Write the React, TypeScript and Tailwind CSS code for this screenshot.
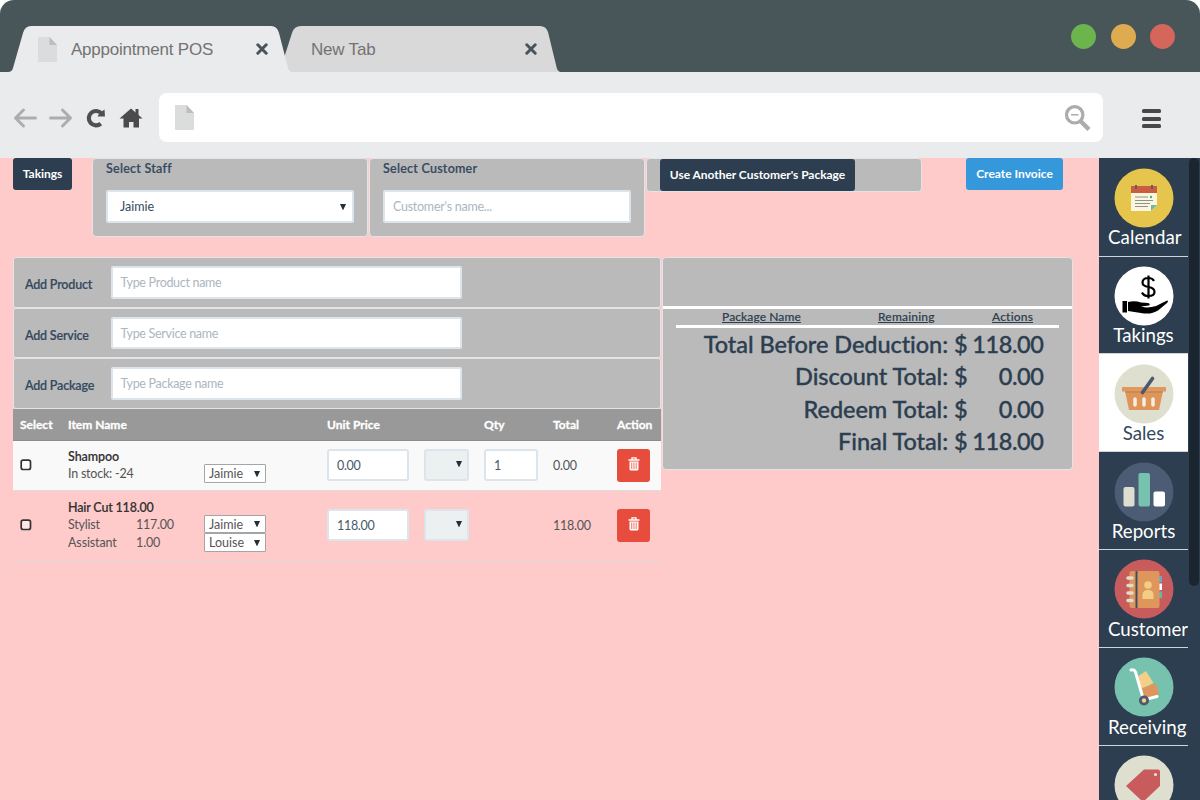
import React from "react";

function PageIcon() {
  return (
    <svg width="19" height="25" viewBox="0 0 19 25" className="block shrink-0">
      <path d="M0 0H11.5L19 8V25H0Z" fill="#dbdddc" />
      <path d="M11.5 0L19 8H11.5Z" fill="#bcbdbd" />
    </svg>
  );
}

function CloseIcon() {
  return (
    <svg width="12" height="12" viewBox="0 0 12 12" className="block shrink-0">
      <path d="M1.8 1.8L10.2 10.2M10.2 1.8L1.8 10.2" stroke="#485459" strokeWidth="3" strokeLinecap="round" />
    </svg>
  );
}

function Browser() {
  return (
    <header className="bg-white">
      <div className="relative flex h-[72px] rounded-t-[14px] bg-[#485559]">
        <svg className="absolute left-0 top-0" width="570" height="72" viewBox="0 0 570 72">
          <path d="M284 58L292 33Q294 26 301 26H540Q546 26 548 32L557 69Q558 71 560 72H290Q284 72 284 58Z" fill="#d9d9d9" />
          <path d="M8 72Q12 72 13 68L23 33Q25 26 31 26H271Q277 26 279 33L288 68Q289 72 293 72Z" fill="#eaebed" />
        </svg>
        <div className="relative mt-[26px] flex h-[46px] w-[286px] items-center pl-[38px] font-['Liberation_Sans',sans-serif] text-[17px] text-[#737373]">
          <PageIcon />
          <span className="ml-[14px] w-[185px] whitespace-nowrap pt-[2px] tracking-[-0.220px]">Apppointment POS</span>
          <CloseIcon />
        </div>
        <div className="relative mt-[26px] flex h-[46px] items-center pl-[25px] font-['Liberation_Sans',sans-serif] text-[17px] text-[#737373]">
          <span className="w-[214px] whitespace-nowrap pt-[2px] tracking-[-0.200px]">New Tab</span>
          <CloseIcon />
        </div>
        <div className="ml-auto flex gap-[14.5px] pr-[25px] pt-[24px]">
          <i className="h-[25px] w-[25px] rounded-full bg-[#6cb44c]" />
          <i className="h-[25px] w-[25px] rounded-full bg-[#dfab50]" />
          <i className="h-[25px] w-[25px] rounded-full bg-[#d5665c]" />
        </div>
      </div>
      <div className="flex h-[86px] items-start bg-[#eaebed] pl-[13px] pt-[21px]">
        <svg width="132" height="24" viewBox="0 0 132 24" className="mt-[13px] shrink-0">
          <g fill="none" stroke="#adadad" strokeWidth="3" strokeLinecap="round" strokeLinejoin="round">
            <path d="M22.500 12H3M10.500 4L2.500 12L10.500 20" />
            <path d="M37.500 12H57M49.500 4L57.500 12L49.500 20" />
          </g>
          <path d="M88.500 7.500A7.200 7.200 0 1 0 87.800 17.600" fill="none" stroke="#505050" strokeWidth="4.200" />
          <path d="M91.500 3.500L92 10.500H84.500L86.500 7Z" fill="#505050" />
          <path d="M118 2.500L129.600 12.500H126V21.500H120.500V16H116V21.500H110.500V12.500H106.500Z" fill="#4b4b4d" />
          <path d="M122.500 3H125.500V9H122.500Z" fill="#4b4b4d" />
        </svg>
        <div className="ml-[14px] flex h-[49px] w-[944px] items-center justify-between rounded-[8px] bg-white pl-[16px] pr-[11px]">
          <PageIcon />
          <svg width="28" height="28" viewBox="0 0 28 28">
            <circle cx="10.700" cy="10.800" r="8.200" fill="none" stroke="#acacac" strokeWidth="3.200" />
            <path d="M7 10.800H14.500" stroke="#acacac" strokeWidth="1.500" />
            <path d="M16.500 17L25 25.500" stroke="#acacac" strokeWidth="4.500" />
          </svg>
        </div>
        <div className="ml-[39px] mt-[16px] flex flex-col gap-[3.500px]">
          <i className="h-[4px] w-[19px] rounded-[1.500px] bg-[#48484a]" />
          <i className="h-[4px] w-[19px] rounded-[1.500px] bg-[#48484a]" />
          <i className="h-[4px] w-[19px] rounded-[1.500px] bg-[#48484a]" />
        </div>
      </div>
    </header>
  );
}

function Arrow() {
  return (
    <svg width="6" height="6" viewBox="0 0 6 6" className="shrink-0">
      <path d="M0 0H6L3.200 6H2.800Z" fill="#222e38" />
    </svg>
  );
}

function Field({ name, title }: { name: string; title: string }) {
  return (
    <div className="flex h-[50.500px] rounded-[3px] border border-[#e2e4e5] bg-[#bababa] pl-[11px]">
      <label className="w-[85.500px] pt-[17.300px] text-[12.500px] font-semibold leading-[20px] tracking-[-0.200px] text-[#34495e] [-webkit-text-stroke:0.150px_#34495e]">{title}</label>
      <div className="mt-[8px] flex h-[32.500px] w-[351.500px] items-center rounded-[2px] border-2 border-[#dce4ec] bg-white pl-[8px] pt-[2.500px] text-[12.500px] tracking-[-0.300px] text-[#acb6c0]">
        {name}
      </div>
    </div>
  );
}

function SmallSelect({ name }: { name: string }) {
  return (
    <div className="flex h-[18.500px] w-[62px] items-center justify-between rounded-[1px] border border-[#a5a5a5] bg-white pl-[4px] pr-[5px] text-[12.500px] leading-[16px] tracking-normal text-[#555]">
      <span className="pt-[1px]">{name}</span>
      <Arrow />
    </div>
  );
}

function GreySelect() {
  return (
    <div className="flex h-[32px] w-[45px] items-center justify-end rounded-[3px] border-2 border-[#dce4ec] bg-[#ecf0f1] pb-[2px] pr-[5px]">
      <Arrow />
    </div>
  );
}

function Price({ value, wide }: { value: string; wide?: boolean }) {
  return (
    <div className={`flex h-[32px] items-center rounded-[3px] border-2 border-[#dce4ec] bg-white pl-[8px] pt-[2px] text-[12.500px] tracking-[-0.300px] text-[#46586a] ${wide ? "w-[82px]" : "w-[54px]"}`}>
      {value}
    </div>
  );
}

function Trash() {
  return (
    <div className="flex h-[33px] w-[33px] items-center justify-center rounded-[3px] bg-[#e74c3c] pb-[3px]">
      <svg width="12" height="14" viewBox="0 0 12 14">
        <path d="M0.500 3H11.500M4 2.800V0.800H8V2.800" fill="none" stroke="#fff" strokeWidth="1.300" />
        <path d="M1.500 4.500H10.500V12Q10.500 13.500 9 13.500H3Q1.500 13.500 1.500 12Z" fill="#fff" />
        <path d="M3.500 5.500V12M5.200 5.500V12M6.900 5.500V12M8.600 5.500V12" stroke="#e74c3c" strokeWidth="0.600" />
      </svg>
    </div>
  );
}

function Check() {
  return (
    <svg width="12" height="12" viewBox="0 0 12 12" className="block">
      <rect x="1.200" y="1.200" width="9.300" height="9.300" rx="2" fill="#fff" fillOpacity="0.500" stroke="#333" strokeWidth="1.700" />
    </svg>
  );
}

const columns = "grid grid-cols-[48px_136px_123px_97px_60px_69px_64px_44px] pl-[7px]";

function ItemTable() {
  return (
    <div className="text-[12.500px] tracking-[-0.220px] text-[#555]">
      <div className={`${columns} h-[32px] items-center border-b border-[#8d8d8d] bg-[#999] pt-[2px] text-[12px] font-bold tracking-normal text-white [-webkit-text-stroke:0.300px_#fff]`}>
        <span>Select</span>
        <span>Item Name</span>
        <span />
        <span>Unit Price</span>
        <span />
        <span>Qty</span>
        <span>Total</span>
        <span>Action</span>
      </div>
      <div className={`${columns} h-[50px] items-center border-b border-[#ddd] bg-[#f9f9f9]`}>
        <Check />
        <div className="leading-[17px]">
          <b className="block font-semibold tracking-[-0.080px] text-[#333] [-webkit-text-stroke:0.100px_#333]">Shampoo</b>
          <span>In stock: -24</span>
        </div>
        <div className="pt-[17px]"><SmallSelect name="Jaimie" /></div>
        <Price value="0.00" wide />
        <GreySelect />
        <Price value="1" />
        <span className="pt-[2px]">0.00</span>
        <Trash />
      </div>
      <div className={`${columns} h-[71px] items-center border-b border-[#e0d5d5] pb-[1px]`}>
        <Check />
        <div className="leading-[17px]">
          <b className="block font-semibold tracking-[-0.180px] text-[#333] [-webkit-text-stroke:0.100px_#333]">Hair Cut 118.00</b>
          <div className="flex"><span className="w-[68px]">Stylist</span><span>117.00</span></div>
          <div className="flex pt-[1.500px] tracking-[-0.120px]"><span className="w-[68px]">Assistant</span><span>1.00</span></div>
        </div>
        <div className="pt-[16.500px]">
          <SmallSelect name="Jaimie" />
          <SmallSelect name="Louise" />
        </div>
        <Price value="118.00" wide />
        <GreySelect />
        <span />
        <span className="pt-[2px]">118.00</span>
        <Trash />
      </div>
    </div>
  );
}

const totals = [
  ["Total Before Deduction:", "118.00"],
  ["Discount Total:", "0.00"],
  ["Redeem Total:", "0.00"],
  ["Final Total:", "118.00"],
];

function Summary() {
  return (
    <section className="h-[213px] w-[411px] rounded-[4px] border border-[#e2e4e5] bg-[#bababa] text-[#2c3e50]">
      <div className="h-[51px] border-b-[3px] border-white" />
      <div className="mx-[13px] flex h-[19px] border-b-[3px] border-white text-[12px] font-medium leading-[15px] tracking-[0.090px] underline [-webkit-text-stroke:0.150px_#2c3e50]">
        <span className="ml-[46px] w-[156px]">Package Name</span>
        <span className="w-[114px] tracking-[0.180px]">Remaining</span>
        <span className="tracking-[0.180px]">Actions</span>
      </div>
      <div className="pr-[28.500px]">
        {totals.map(([title, amount]) => (
          <div key={title} className="flex h-[32.300px] items-center justify-end whitespace-pre text-[23.500px] font-medium leading-[32px] [font-variant-ligatures:none] [-webkit-text-stroke:0.350px_#2c3e50]">
            <span className="tracking-[-0.060px]">{title} $</span>
            <span className="w-[76px] text-right tracking-[-0.400px]">{amount}</span>
          </div>
        ))}
      </div>
    </section>
  );
}

function MainArea() {
  return (
    <main className="w-[1099px] bg-[#fecaca] pl-[13px]">
      <div className="flex h-[99px] items-start text-[12px] font-bold">
        <button className="h-[32px] w-[59px] rounded-[3px] bg-[#2c3e50] tracking-[-0.050px] text-white">Takings</button>
        <div className="ml-[20px] h-[79px] w-[276px] rounded-[4px] border border-[#e2e4e5] bg-[#bababa] px-[13px] text-[#34495e]">
          <div className="h-[31px] text-[12.500px] font-semibold leading-[19px] tracking-[0.240px] [-webkit-text-stroke:0.150px_#34495e]">Select Staff</div>
          <div className="flex h-[33px] w-[248px] items-center justify-between rounded-[2px] border-2 border-[#dce4ec] bg-white pl-[12px] pr-[6px] text-[12.500px] font-normal">
            <span className="pt-[1px]">Jaimie</span><Arrow />
          </div>
        </div>
        <div className="ml-[1px] h-[79px] w-[276px] rounded-[4px] border border-[#e2e4e5] bg-[#bababa] px-[13px] text-[#34495e]">
          <div className="h-[31px] text-[12.500px] font-semibold leading-[19px] tracking-[0.240px] [-webkit-text-stroke:0.150px_#34495e]">Select Customer</div>
          <div className="flex h-[33px] w-[248px] items-center rounded-[2px] border-2 border-[#dce4ec] bg-white pl-[8px] pt-[1px] text-[12.500px] font-normal tracking-[-0.260px] text-[#acb6c0]">Customer's name...</div>
        </div>
        <div className="ml-[1px] h-[34px] w-[276px] rounded-[4px] border border-[#e2e4e5] bg-[#bababa] pl-[13px]">
          <button className="block h-[32px] w-[195px] whitespace-nowrap rounded-[3px] bg-[#2c3e50] tracking-[-0.040px] text-white">Use Another Customer's Package</button>
        </div>
        <button className="ml-[44px] h-[32px] w-[97px] rounded-[3px] bg-[#3498db] text-white">Create Invoice</button>
      </div>
      <div className="flex items-start">
        <div className="w-[648px]">
          <Field title="Add Product" name="Type Product name" />
          <Field title="Add Service" name="Type Service name" />
          <Field title="Add Package" name="Type Package name" />
          <ItemTable />
        </div>
        <div className="ml-[1px]"><Summary /></div>
      </div>
    </main>
  );
}

const icons: Record<string, React.ReactNode> = {
  Calendar: (
    <>
      <circle cx="30" cy="30" r="29.500" fill="#e5c54b" />
      <path d="M17 24H43V37L37 43H17Z" fill="#fcf7dc" />
      <path d="M17 18H43V25H17Z" fill="#cb5c42" />
      <path d="M22 17V21M38 17V21" stroke="#59636d" strokeWidth="2" />
      <path d="M21 29H34M21 32.500H39M21 35.500H36M21 38.500H34" stroke="#8c9390" strokeWidth="1" />
      <circle cx="37" cy="29" r="1.200" fill="#4aa99a" />
      <path d="M43 37L37 43V37Z" fill="#6cbba8" />
    </>
  ),
  Takings: (
    <>
      <circle cx="30" cy="30" r="29.500" fill="#fff" />
      <path d="M40 15Q38.500 12 34.500 12Q28.500 12 28.500 16.500Q28.500 20 34.500 21Q40.500 22 40.500 26Q40.500 30 34.500 30Q29.500 30 28 26.500M34.500 9.500V32.500" fill="none" stroke="#000" strokeWidth="2.200" />
      <path d="M8.500 35H13V46.500H8.500ZM14 36Q21 34.500 27 36.500L34 37Q37 38 35 39.500L27 40.500Q34 42.500 42 40L53 34.500Q55 35 53 37L44 44.500Q37 49 27 47L14 45Z" fill="#000" />
    </>
  ),
  Sales: (
    <>
      <circle cx="30" cy="30" r="29.500" fill="#dedfcf" />
      <path d="M11 27H49L45 46H15Z" fill="#df955a" />
      <path d="M8 23H52V27.500H8Z" fill="#e19a5e" />
      <path d="M11 28H49" stroke="#b97c50" />
      <path d="M21 35V41M30 35V41M39 35V41" stroke="#f5eedc" strokeWidth="3.500" strokeLinecap="round" />
      <path d="M28.500 28.500L38.500 14.500" stroke="#4a5870" strokeWidth="3.600" strokeLinecap="round" />
    </>
  ),
  Reports: (
    <>
      <circle cx="30" cy="30" r="29.500" fill="#4c5c74" />
      <rect x="9.500" y="25" width="11" height="19.500" rx="2" fill="#deded0" />
      <rect x="24.500" y="11" width="11.500" height="33.500" rx="2" fill="#76c2af" />
      <rect x="39.500" y="29.500" width="11.500" height="15" rx="2" fill="#fff" />
    </>
  ),
  Customer: (
    <>
      <circle cx="30" cy="30" r="29.500" fill="#c85c5c" />
      <path d="M43 17H48V23H43Z" fill="#64a9d3" />
      <path d="M43 24.500H48V31H43Z" fill="#fff" />
      <path d="M43 32.500H48V39H43Z" fill="#64b8a5" />
      <rect x="15.500" y="12" width="30" height="37" rx="2" fill="#df965c" />
      <path d="M22.500 12V49" stroke="#414e62" strokeWidth="2" />
      <path d="M14 19H18M14 26.500H18M14 34H18M14 41.500H18" stroke="#e0ddcb" strokeWidth="3.500" strokeLinecap="round" />
      <circle cx="34" cy="26" r="3.800" fill="#f3cd86" />
      <path d="M28.500 40V36Q28.500 31 34 31Q39.500 31 39.500 36V40Z" fill="#f3cd86" />
    </>
  ),
  Receiving: (
    <>
      <circle cx="30" cy="30" r="29.500" fill="#76c2af" />
      <path d="M23 20L32 14L39.500 26L28 32Z" fill="#f4cf88" />
      <path d="M28 31L42 26.500L45 37L31 42Z" fill="#df965c" />
      <path d="M17 13Q20 12 21.500 15L29.500 43L43 39.500" fill="none" stroke="#fff" strokeWidth="3" strokeLinecap="round" />
      <circle cx="30" cy="43.500" r="5" fill="#4b596c" />
      <circle cx="30" cy="43.500" r="2.200" fill="#f4cf88" />
    </>
  ),
  Tag: (
    <>
      <circle cx="30" cy="30" r="29.500" fill="#dedfcf" />
      <path d="M30 14.500H44Q46 14.500 46 16.500V31L29 47L12 31Z" fill="#c85c5c" />
      <circle cx="41.500" cy="19.500" r="1.600" fill="#e9dfd2" />
    </>
  ),
};

function Sidebar() {
  return (
    <aside className="flex w-[101px] bg-[#2c3e50]">
      <nav className="h-[642px] w-[89px] overflow-hidden pt-[0.800px]">
        {["Calendar", "Takings", "Sales", "Reports", "Customer", "Receiving", "Tag"].map((name) => (
          <div
            key={name}
            className={`h-[97.850px] border-b border-[#ced4d9] pt-[9.200px] ${name === "Sales" ? "bg-white text-[#34495e]" : "text-white"}`}
          >
            <svg width="60" height="60" viewBox="0 0 60 60" className="ml-[14.500px] block">{icons[name]}</svg>
            {name !== "Tag" && (
              <div className={`-mt-[2.500px] whitespace-nowrap pl-[9px] text-[18.700px] leading-[24px] ${name === "Calendar" ? "tracking-[0.080px]" : ""} ${name === "Customer" || name === "Receiving" || name === "Calendar" ? "" : "pr-[9px] text-center"}`}>
                {name}
              </div>
            )}
          </div>
        ))}
      </nav>
      <div className="w-[12px] pl-[1px]">
        <div className="h-[428px] w-[10px] rounded-[5px] bg-[#1b252f]" />
      </div>
    </aside>
  );
}

export default function App() {
  return (
    <div className="h-[800px] w-[1200px] overflow-hidden bg-[#fecaca] font-['Lato',sans-serif]">
      <Browser />
      <div className="flex h-[642px]">
        <MainArea />
        <Sidebar />
      </div>
    </div>
  );
}
